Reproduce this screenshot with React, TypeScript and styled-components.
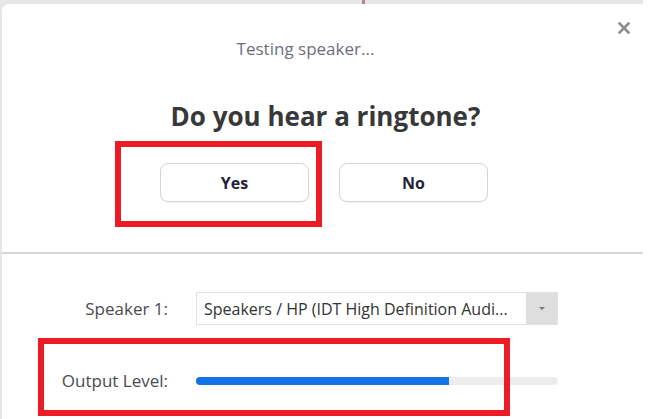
import React from "react";
import styled, { createGlobalStyle } from "styled-components";

const Global = createGlobalStyle`
  html, body { margin: 0; padding: 0; background: #ffffff; }
  body { font-family: "Open Sans", "Noto Sans", "Liberation Sans", sans-serif; overflow: hidden; }
`;

const Backdrop = styled.div`
  position: relative;
  width: 641px;
  height: 415px;
  padding: 4px 0 0 2px;
  background: #e6e6e6;
`;

const BehindMark = styled.span`
  position: absolute;
  left: 362px;
  top: 0;
  width: 3px;
  height: 4px;
  background: #a98a90;
`;

const Dialog = styled.div`
  position: relative;
  height: 415px;
  background: #ffffff;
  border-top-left-radius: 7px;
  display: flex;
  flex-direction: column;
`;

const CloseButton = styled.button`
  position: absolute;
  top: 17px;
  right: 12px;
  width: 14px;
  height: 14px;
  padding: 0;
  border: none;
  background: transparent;
  display: flex;
  align-items: center;
  justify-content: center;
`;

const Top = styled.section`
  display: flex;
  flex-direction: column;
  align-items: center;
  padding-top: 33px;
  height: 250px;
  box-sizing: border-box;
  border-bottom: 2px solid #d6d6d6;
`;

const Status = styled.div`
  font-size: 17px;
  line-height: 24px;
  color: #6f6e7c;
  margin-left: -34px;
`;

const Question = styled.h1`
  margin: 38px 0 0 6px;
  font-size: 26px;
  line-height: 34px;
  font-weight: 700;
  color: #383838;
`;

const ButtonRow = styled.div`
  display: flex;
  gap: 30px;
  margin-top: 30px;
  padding-left: 3px;
`;

const Choice = styled.button`
  width: 149px;
  height: 39px;
  border: 1px solid #d3d3de;
  border-radius: 8px;
  background: #ffffff;
  font-family: "Open Sans", "Noto Sans", sans-serif;
  font-size: 16px;
  font-weight: 700;
  color: #23233a;
  box-shadow: 0 1px 1px rgba(0,0,0,0.04);
`;

const Settings = styled.section`
  display: grid;
  grid-template-columns: 166px 362px;
  grid-template-rows: 33px 24px;
  column-gap: 28px;
  row-gap: 44px;
  align-items: center;
  padding-top: 38px;
`;

const Label = styled.div`
  justify-self: end;
  font-size: 17px;
  line-height: 24px;
  color: #4b4b50;
`;

const Select = styled.div`
  display: flex;
  height: 33px;
  border: 1px solid #e2e2e2;
  box-sizing: border-box;
`;

const SelectText = styled.div`
  flex: 1;
  display: flex;
  align-items: center;
  padding-left: 7px;
  font-size: 16px;
  color: #333333;
  white-space: nowrap;
  overflow: hidden;
`;

const SelectArrow = styled.div`
  width: 31px;
  background: #dedede;
  display: flex;
  align-items: center;
  justify-content: center;
  &::after {
    content: "";
    border-left: 3px solid transparent;
    border-right: 3px solid transparent;
    border-top: 3px solid #777777;
  }
`;

const Track = styled.div`
  height: 8px;
  background: #ececec;
  border-radius: 4px;
  overflow: hidden;
  display: flex;
`;

const Fill = styled.div`
  height: 100%;
  background: #1473e6;
`;

const Highlight = styled.div<{ $l: number; $t: number; $w: number; $h: number }>`
  position: absolute;
  left: ${(p) => p.$l}px;
  top: ${(p) => p.$t}px;
  width: ${(p) => p.$w}px;
  height: ${(p) => p.$h}px;
  border: 6px solid #ec1c24;
  box-sizing: border-box;
  pointer-events: none;
`;

export default function App() {
  const level = 0.7;
  return (
    <>
      <Global />
      <Backdrop>
        <BehindMark />
        <Dialog>
          <CloseButton aria-label="Close">
            <svg width="12" height="12" viewBox="0 0 12 12">
              <path d="M1.5 1.5 L10.5 10.5 M10.5 1.5 L1.5 10.5" stroke="#8d8d8d" strokeWidth="2.6" strokeLinecap="square" />
            </svg>
          </CloseButton>
          <Top>
            <Status>Testing speaker...</Status>
            <Question>Do you hear a ringtone?</Question>
            <ButtonRow>
              <Choice>Yes</Choice>
              <Choice>No</Choice>
            </ButtonRow>
          </Top>
          <Settings>
            <Label>Speaker 1:</Label>
            <Select>
              <SelectText>Speakers / HP (IDT High Definition Audi...</SelectText>
              <SelectArrow />
            </Select>
            <Label>Output Level:</Label>
            <Track>
              <Fill style={{ width: `${level * 100}%` }} />
            </Track>
          </Settings>
          <Highlight $l={113} $t={137} $w={207} $h={86} />
          <Highlight $l={36} $t={334} $w={472} $h={78} />
        </Dialog>
      </Backdrop>
    </>
  );
}
